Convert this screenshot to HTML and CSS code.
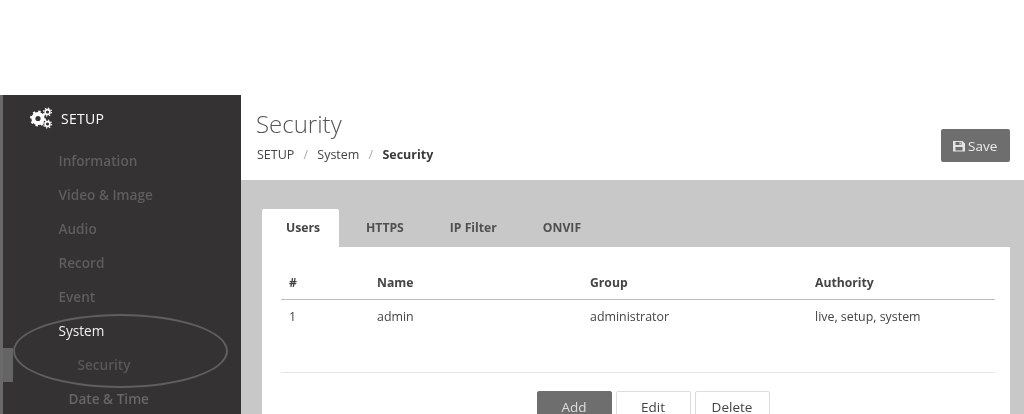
FILE: index.html
```html
<!DOCTYPE html>
<html lang="en">
<head>
    <meta charset="UTF-8">
    <meta name="viewport" content="width=device-width, initial-scale=1.0">
    <title>Security</title>
    <link rel="stylesheet" href="styles.css">
</head>
<body>
<div class="page">
    <aside class="sidebar">
        <div class="side-title">
            <svg class="gears" width="24" height="24" viewBox="0 0 24 24">
                <g fill="none" stroke="#fff">
                    <circle cx="9" cy="12.5" r="4.6" stroke-width="4"/>
                    <circle cx="9" cy="12.5" r="7" stroke-width="2" stroke-dasharray="2.4 3.1"/>
                    <circle cx="18.5" cy="6" r="2.4" stroke-width="1.6"/>
                    <circle cx="18.5" cy="6" r="3.9" stroke-width="1.2" stroke-dasharray="1.4 1.66"/>
                    <circle cx="18.5" cy="18" r="2.4" stroke-width="1.6"/>
                    <circle cx="18.5" cy="18" r="3.9" stroke-width="1.2" stroke-dasharray="1.4 1.66"/>
                </g>
            </svg>
            <span>SETUP</span>
        </div>
        <ul class="side-menu">
            <li>Information</li>
            <li>Video &amp; Image</li>
            <li>Audio</li>
            <li>Record</li>
            <li>Event</li>
            <li class="current">System</li>
            <li class="sub">Security</li>
            <li class="sub2">Date &amp; Time</li>
        </ul>
        <div class="marker"></div>
        <div class="ring"></div>
    </aside>
    <main class="content">
        <header class="top">
            <div>
                <h1>Security</h1>
                <div class="crumbs">
                    <span>SETUP</span><i>/</i><span>System</span><i>/</i><b>Security</b>
                </div>
            </div>
            <button class="save">
                <svg width="12" height="12" viewBox="0 0 12 12">
                    <path fill="#e4e4e4" fill-rule="evenodd" d="M0 1h9.500L12 3.500V11.500H0zM2.500 2v3h6V2zM6.500 2.500h1.300v2H6.500zM2.500 7v3.500h7V7z"/>
                </svg>
                Save
            </button>
        </header>
        <section class="panel-area">
            <nav class="tabs">
                <a class="tab active">Users</a>
                <a class="tab">HTTPS</a>
                <a class="tab">IP Filter</a>
                <a class="tab">ONVIF</a>
            </nav>
            <div class="card">
                <table>
                    <thead>
                        <tr><th class="c1">#</th><th class="c2">Name</th><th class="c3">Group</th><th>Authority</th></tr>
                    </thead>
                    <tbody>
                        <tr><td>1</td><td>admin</td><td>administrator</td><td>live, setup, system</td></tr>
                    </tbody>
                </table>
                <div class="actions">
                    <button class="btn primary">Add</button>
                    <button class="btn">Edit</button>
                    <button class="btn">Delete</button>
                </div>
            </div>
        </section>
    </main>
</div>
</body>
</html>
```

FILE: styles.css
```css
html, body {
    height: 414px;
    overflow: hidden;
}
body {
    margin: 0;
    padding-top: 95px;
    box-sizing: border-box;
    background-color: #fff;
    font-family: "Open Sans", sans-serif;
    color: #444;
}
/* reference is a soft print scan */
.page {
    display: flex;
    height: 319px;
    overflow: hidden;
    filter: blur(0.4px);
}
.sidebar {
    position: relative;
    width: 238px;
    flex: none;
    background-color: #343233;
    border-left: 3px solid #6a6a6a;
}
.side-title {
    display: flex;
    align-items: center;
    gap: 8px;
    padding: 11px 0 0 26px;
    height: 24px;
    color: #fff;
    font-size: 14px;
    letter-spacing: 0.3px;
}
.side-menu {
    list-style: none;
    margin: 14px 0 0;
    padding: 0 0 0 55.500px;
    font-size: 13.600px;
    font-weight: 600;
    color: #5f5d5e;
}
.side-menu li {
    height: 34px;
    line-height: 34px;
}
.side-menu .current {
    font-weight: 400;
    color: #f0f0f0;
}
.side-menu .sub {
    padding-left: 19px;
    color: #595758;
}
.side-menu .sub2 {
    padding-left: 10px;
    color: #686667;
}
.marker {
    position: absolute;
    left: 0;
    top: 253px;
    width: 10px;
    height: 34px;
    background-color: #656565;
}
.ring {
    position: absolute;
    left: 10px;
    top: 219px;
    width: 211px;
    height: 70px;
    border: 2px solid #5f5f5f;
    border-radius: 50%;
}
.content {
    flex: 1;
    min-width: 0;
}
.top {
    display: flex;
    justify-content: space-between;
    align-items: flex-start;
    height: 85px;
    padding: 0 14px 0 15px;
}
h1 {
    margin: 12px 0 0;
    font-size: 24px;
    line-height: 34px;
    font-weight: 300;
    color: #555;
}
.crumbs {
    margin-top: 5px;
    padding-left: 1px;
    font-size: 12.500px;
    line-height: 18px;
    color: #444;
}
.crumbs i {
    margin: 0 9.200px;
    font-style: normal;
    color: #aaa;
}
.crumbs b {
    color: #3a3a3a;
}
.save {
    display: flex;
    align-items: center;
    gap: 3px;
    margin-top: 34px;
    width: 69px;
    height: 33px;
    padding: 0 0 0 12px;
    border: none;
    border-radius: 2px;
    background-color: #6e6e6e;
    color: #ececec;
    font-family: inherit;
    font-size: 13.500px;
}
.panel-area {
    height: 234px;
    padding: 29px 14px 0 21px;
    background-color: #c8c8c8;
}
.tabs {
    display: flex;
    height: 38px;
}
.tab {
    padding: 0 23px;
    line-height: 38px;
    font-size: 12.200px;
    font-weight: 700;
    color: #505050;
}
.tab.active {
    width: 77px;
    box-sizing: border-box;
    padding: 0 0 0 24px;
    margin-right: 4px;
    background-color: #fff;
    border-radius: 2px 2px 0 0;
    color: #444;
}
.card {
    background-color: #fff;
    padding: 18px 15px 0 19px;
    height: 200px;
}
table {
    width: 100%;
    border-collapse: collapse;
    font-size: 12.400px;
    color: #444;
}
th {
    height: 34px;
    padding: 0 0 0 8px;
    text-align: left;
    font-size: 12.200px;
    font-weight: 700;
    border-bottom: 1px solid #bdbdbd;
}
td {
    height: 32px;
    padding: 0 0 2px 8px;
}
.c1 { width: 80px; }
.c2 { width: 205px; }
.c3 { width: 217px; }
.actions {
    display: flex;
    justify-content: center;
    gap: 4px;
    margin-top: 38px;
    padding: 18px 0 0 30px;
    border-top: 1px solid #e4e4e4;
}
.btn {
    width: 75px;
    height: 32px;
    padding: 0;
    border: 1px solid #ddd;
    border-radius: 2px;
    background-color: #fff;
    color: #444;
    font-family: inherit;
    font-size: 13.500px;
}
.btn.primary {
    background-color: #6e6e6e;
    border-color: #6e6e6e;
    color: #ddd;
}
```
